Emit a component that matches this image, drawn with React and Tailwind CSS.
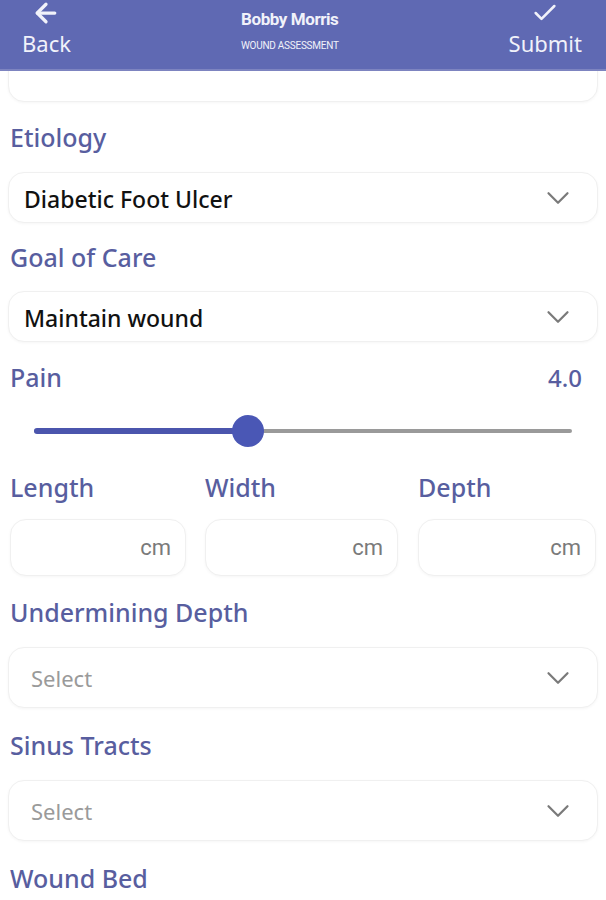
import React from "react";
import { ArrowLeft, Check, ChevronDown } from "lucide-react";

const label = "text-[25px] leading-none font-medium text-[#585e9f] font-['Noto_Sans',sans-serif]";

function Label({ children, className = "" }) {
  return <div className={`${label} ${className}`}>{children}</div>;
}

function Select({ value, placeholder, tall }) {
  return (
    <div
      className={`mx-2 flex items-center justify-between rounded-2xl border border-[#f0f0f0] bg-white shadow-[0_1px_3px_rgba(0,0,0,0.04)] ${
        tall ? "h-[61px] pl-[22px]" : "h-[51px] pl-[15px]"
      } pr-[20px]`}
    >
      {value ? (
        <span className="text-[23px] font-medium text-[#111] font-['Noto_Sans',sans-serif] pt-1">{value}</span>
      ) : (
        <span className="text-[22px] text-[#9a9a9a] font-['Noto_Sans',sans-serif] pt-[2px]">{placeholder}</span>
      )}
      <ChevronDown className="h-[38px] w-[38px] text-[#7a7a7a]" strokeWidth={1.4} />
    </div>
  );
}

function CmInput({ className = "" }) {
  return (
    <div
      className={`flex h-[57px] items-center justify-end rounded-2xl border border-[#f0f0f0] bg-white pr-[14px] shadow-[0_1px_3px_rgba(0,0,0,0.04)] ${className}`}
    >
      <span className="text-[22px] text-[#7a7a7a] font-['Roboto',sans-serif]">cm</span>
    </div>
  );
}

export default function App() {
  return (
    <div className="w-[606px] h-[900px] overflow-hidden bg-white">
      {/* Header */}
      <div className="relative z-10 flex h-[71px] items-start justify-between border-b-2 border-[#7d84c0] bg-[#5f69b3] pl-[22px] pr-[24px] text-[#f1f2fa]">
        <div className="flex flex-col items-center">
          <ArrowLeft className="-mt-[2px] h-[30px] w-[30px]" strokeWidth={2.6} />
          <span className="mt-[4px] text-[22px] leading-none font-['Noto_Sans',sans-serif]">Back</span>
        </div>
        <div className="flex flex-col items-center pt-[11px] font-['Roboto',sans-serif]">
          <span className="text-[17px] font-bold leading-none tracking-tight">Bobby Morris</span>
          <span className="mt-[13px] text-[10px] leading-none tracking-tight">WOUND ASSESSMENT</span>
        </div>
        <div className="flex flex-col items-center">
          <Check className="-mt-[1px] h-[28px] w-[28px]" strokeWidth={2.2} />
          <span className="mt-[5px] text-[22px] leading-none font-['Noto_Sans',sans-serif]">Submit</span>
        </div>
      </div>

      {/* Partially scrolled card */}
      <div className="mx-2 -mt-4 h-[47px] rounded-2xl border border-[#f0f0f0] bg-white shadow-[0_1px_3px_rgba(0,0,0,0.04)]" />

      <div className="flex flex-col">
        <Label className="ml-[10px] mt-[23px]">Etiology</Label>
        <div className="mt-[22px]">
          <Select value="Diabetic Foot Ulcer" />
        </div>

        <Label className="ml-[10px] mt-[22px]">Goal of Care</Label>
        <div className="mt-[21px]">
          <Select value="Maintain wound" />
        </div>

        <div className="mx-[10px] mt-[23px] flex items-center justify-between">
          <Label>Pain</Label>
          <span className="mr-[14px] text-[24px] leading-none font-medium text-[#585e9f] font-['Noto_Sans',sans-serif]">4.0</span>
        </div>

        {/* Slider */}
        <div className="relative mx-[34px] mt-[25px] h-8">
          <div className="absolute left-0 right-0 top-[14px] h-[4px] rounded-full bg-[#9a9a9a]" />
          <div className="absolute left-0 top-[13px] h-[6px] w-[214px] rounded-full bg-[#4b55ad]" />
          <div className="absolute left-[198px] top-0 h-8 w-8 rounded-full bg-[#4a57b5]" />
        </div>

        {/* Dimensions */}
        <div className="mt-[28px] flex px-[10px]">
          <div className="w-[195px]">
            <Label>Length</Label>
            <CmInput className="mt-[19px] mr-[19px]" />
          </div>
          <div className="w-[213px]">
            <Label>Width</Label>
            <CmInput className="mt-[19px] mr-[20px]" />
          </div>
          <div className="flex-1">
            <Label>Depth</Label>
            <CmInput className="mt-[19px]" />
          </div>
        </div>

        <Label className="ml-[10px] mt-[24px]">Undermining Depth</Label>
        <div className="mt-[22px]">
          <Select placeholder="Select" tall />
        </div>

        <Label className="ml-[10px] mt-[25px]">Sinus Tracts</Label>
        <div className="mt-[22px]">
          <Select placeholder="Select" tall />
        </div>

        <Label className="ml-[10px] mt-[25px]">Wound Bed</Label>
      </div>
    </div>
  );
}
